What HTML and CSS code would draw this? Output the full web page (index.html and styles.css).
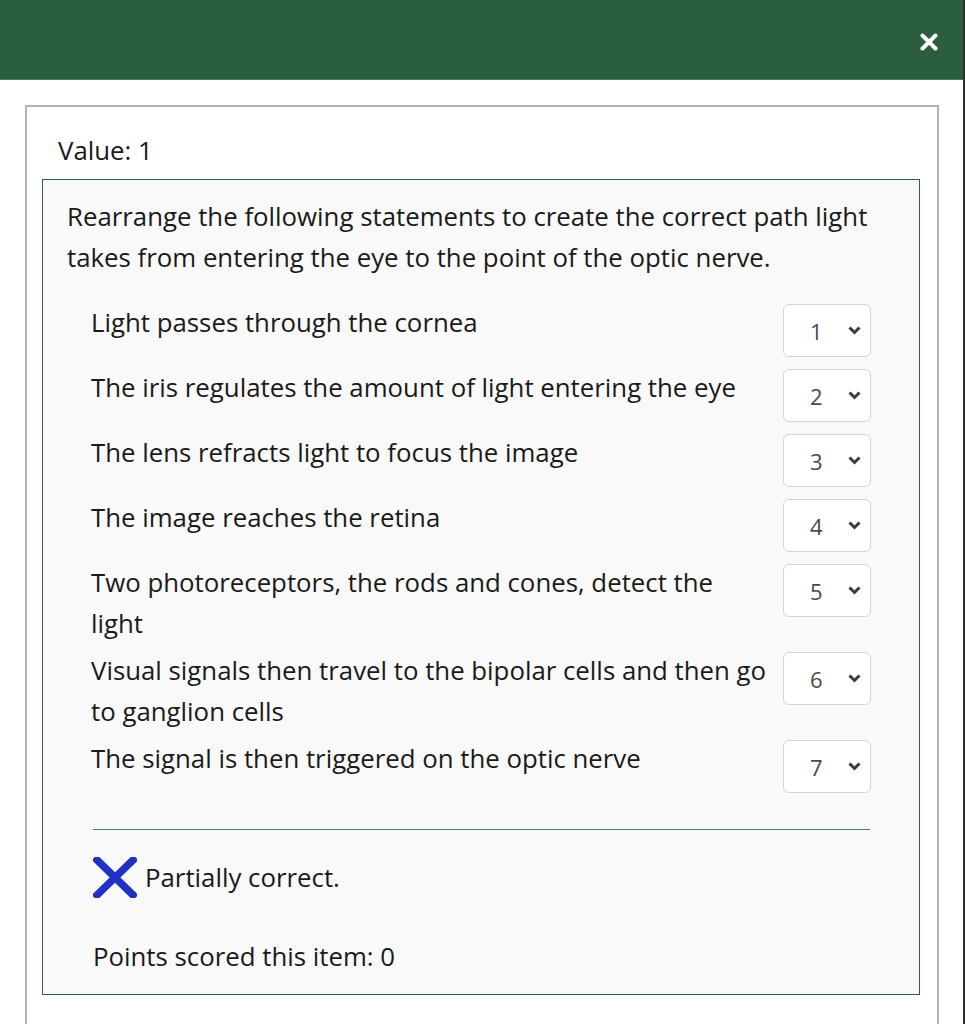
FILE: index.html
```html
<!DOCTYPE html>
<html lang="en">
<head>
    <meta charset="UTF-8">
    <meta name="viewport" content="width=device-width, initial-scale=1.0">
    <title>Value: 1</title>
    <link rel="stylesheet" href="styles.css">
</head>
<body>
    <header class="top-bar">
        <button class="close-btn" aria-label="Close">
            <svg width="18" height="18" viewBox="0 0 18 18">
                <path d="M2.5 2.5 L15.5 15.5 M15.5 2.5 L2.5 15.5" stroke="#fff" stroke-width="4" stroke-linecap="round"/>
            </svg>
        </button>
    </header>

    <main class="page">
        <div class="item-panel">
            <p class="item-value">Value: 1</p>

            <section class="question-box">
                <p class="prompt">Rearrange the following statements to create the correct path light takes from entering the eye to the point of the optic nerve.</p>

                <div class="order-area">
                    <ol class="order-list">
                        <li class="order-row">
                            <span class="statement">Light passes through the cornea</span>
                            <div class="rank-select"><span>1</span><svg class="chevron" width="13" height="9" viewBox="0 0 13 9"><path d="M1.5 1.5 L6.5 6.5 L11.5 1.5" fill="none" stroke="#3b3b3b" stroke-width="3"/></svg></div>
                        </li>
                        <li class="order-row">
                            <span class="statement">The iris regulates the amount of light entering the eye</span>
                            <div class="rank-select"><span>2</span><svg class="chevron" width="13" height="9" viewBox="0 0 13 9"><path d="M1.5 1.5 L6.5 6.5 L11.5 1.5" fill="none" stroke="#3b3b3b" stroke-width="3"/></svg></div>
                        </li>
                        <li class="order-row">
                            <span class="statement">The lens refracts light to focus the image</span>
                            <div class="rank-select"><span>3</span><svg class="chevron" width="13" height="9" viewBox="0 0 13 9"><path d="M1.5 1.5 L6.5 6.5 L11.5 1.5" fill="none" stroke="#3b3b3b" stroke-width="3"/></svg></div>
                        </li>
                        <li class="order-row">
                            <span class="statement">The image reaches the retina</span>
                            <div class="rank-select"><span>4</span><svg class="chevron" width="13" height="9" viewBox="0 0 13 9"><path d="M1.5 1.5 L6.5 6.5 L11.5 1.5" fill="none" stroke="#3b3b3b" stroke-width="3"/></svg></div>
                        </li>
                        <li class="order-row">
                            <span class="statement">Two photoreceptors, the rods and cones, detect the light</span>
                            <div class="rank-select"><span>5</span><svg class="chevron" width="13" height="9" viewBox="0 0 13 9"><path d="M1.5 1.5 L6.5 6.5 L11.5 1.5" fill="none" stroke="#3b3b3b" stroke-width="3"/></svg></div>
                        </li>
                        <li class="order-row">
                            <span class="statement">Visual signals then travel to the bipolar cells and then go to ganglion cells</span>
                            <div class="rank-select"><span>6</span><svg class="chevron" width="13" height="9" viewBox="0 0 13 9"><path d="M1.5 1.5 L6.5 6.5 L11.5 1.5" fill="none" stroke="#3b3b3b" stroke-width="3"/></svg></div>
                        </li>
                        <li class="order-row">
                            <span class="statement">The signal is then triggered on the optic nerve</span>
                            <div class="rank-select"><span>7</span><svg class="chevron" width="13" height="9" viewBox="0 0 13 9"><path d="M1.5 1.5 L6.5 6.5 L11.5 1.5" fill="none" stroke="#3b3b3b" stroke-width="3"/></svg></div>
                        </li>
                    </ol>

                    <hr class="divider">

                    <div class="feedback">
                        <svg class="wrong-mark" width="44" height="41" viewBox="0 0 44 41">
                            <path d="M4 3 L40 38 M40 3 L4 38" stroke="#2131c4" stroke-width="7.5" stroke-linecap="square"/>
                        </svg>
                        <span>Partially correct.</span>
                    </div>

                    <p class="points">Points scored this item: 0</p>
                </div>
            </section>
        </div>
    </main>
</body>
</html>
```

FILE: styles.css
```css
* {
    margin: 0;
    padding: 0;
    box-sizing: border-box;
}

body {
    font-family: "Open Sans", "Noto Sans", Arial, sans-serif;
    font-size: 25.8px;
    line-height: 41px;
    color: #1a1a1a;
    background: #ffffff;
    width: 965px;
    height: 1024px;
    overflow: hidden;
    border-right: 2px solid #2e2e2e;
}

.top-bar {
    height: 80px;
    background: #2a5e3c;
    border-bottom: 1px solid #4b7d5b;
    display: flex;
    align-items: center;
    justify-content: flex-end;
    padding-right: 25px;
}

.close-btn {
    background: none;
    border: none;
    width: 18px;
    height: 18px;
    display: flex;
    margin-top: 4px;
    cursor: pointer;
}

.page {
    padding: 25px 0 0 25px;
}

.item-panel {
    width: 914px;
    border: 2px solid #b3b3b3;
    border-bottom: none;
    padding: 23px 17px 60px 15px;
}

.item-value {
    padding-left: 16px;
    margin-bottom: 8px;
}

.question-box {
    background: #f9f9f9;
    border: 1px solid #2f6241;
    padding: 16px 24px 17px 24px;
}

.order-area {
    margin: 24px 24px 0 24px;
}

.order-list {
    list-style: none;
}

.order-row {
    display: flex;
    justify-content: space-between;
    align-items: flex-start;
    margin-bottom: 6px;
}

.statement {
    flex: 1;
    margin-right: 15px;
}

.rank-select {
    width: 88px;
    height: 53px;
    margin: 2px 0 4px 0;
    background: #ffffff;
    border: 1px solid #d4d4d4;
    border-radius: 6px;
    display: flex;
    align-items: center;
    justify-content: space-between;
    padding: 0 9px 0 26px;
    color: #4a4a4a;
    font-size: 22px;
}

.rank-select span {
    margin-top: 2px;
}

.divider {
    border: none;
    border-top: 1px solid #4d7a5c;
    margin: 32px 1px 0 2px;
}

.feedback {
    display: flex;
    align-items: center;
    gap: 8px;
    margin-top: 27px;
    padding-left: 2px;
}

.points {
    margin-top: 38px;
    padding-left: 2px;
}
```
